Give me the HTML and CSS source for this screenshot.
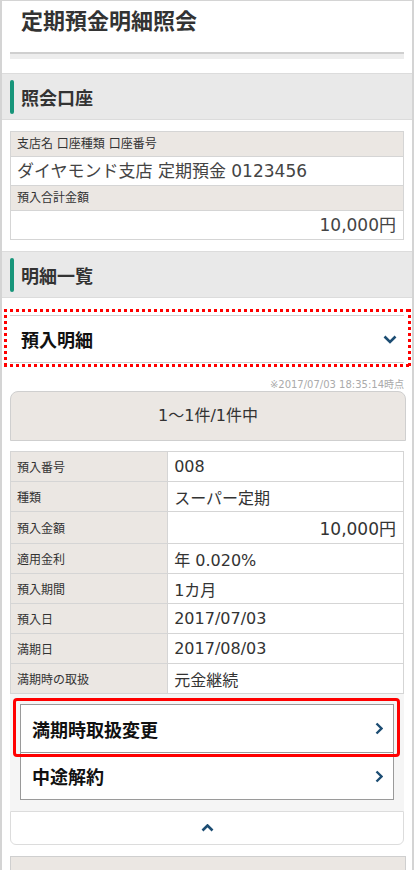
FILE: index.html
```html
<!DOCTYPE html>
<html lang="ja">
  <head>
    <meta charset="UTF-8" />
    <meta name="viewport" content="width=device-width, initial-scale=1.0" />
    <title>定期預金明細照会</title>
    <link rel="stylesheet" href="styles.css">
  </head>
  <body>
    <div class="page">
      <!-- Page header -->
      <header class="page-head">
        <h1 class="page-title">定期預金明細照会</h1>
        <div class="tab-rule"></div>
      </header>

      <!-- Account -->
      <section class="block">
        <h2 class="block-title">照会口座</h2>
        <div class="block-body">
          <table class="info-table">
            <tr><th>支店名 口座種類 口座番号</th></tr>
            <tr><td>ダイヤモンド支店 定期預金 0123456</td></tr>
            <tr><th>預入合計金額</th></tr>
            <tr><td class="num">10,000円</td></tr>
          </table>
        </div>
      </section>

      <!-- Detail list -->
      <section class="block">
        <h2 class="block-title">明細一覧</h2>
        <div class="block-body">
          <div class="acc-head">
            <span>預入明細</span>
            <svg width="14" height="9" viewBox="0 0 14 9"><path d="M1.5 1.5 L7 7 L12.5 1.5" fill="none" stroke="#1c4d73" stroke-width="2.6"/></svg>
          </div>
          <p class="stamp">※2017/07/03 18:35:14時点</p>
          <div class="pager">1〜1件/1件中</div>

          <table class="detail-table">
            <tr><th>預入番号</th><td>008</td></tr>
            <tr><th>種類</th><td>スーパー定期</td></tr>
            <tr class="amount"><th>預入金額</th><td class="num">10,000円</td></tr>
            <tr><th>適用金利</th><td>年 0.020%</td></tr>
            <tr><th>預入期間</th><td>1カ月</td></tr>
            <tr><th>預入日</th><td>2017/07/03</td></tr>
            <tr><th>満期日</th><td>2017/08/03</td></tr>
            <tr><th>満期時の取扱</th><td>元金継続</td></tr>
          </table>

          <div class="actions">
            <a class="action-btn is-marked" href="#">
              <span>満期時取扱変更</span>
              <svg width="8" height="13" viewBox="0 0 8 13"><path d="M1.5 1.5 L6.5 6.5 L1.5 11.5" fill="none" stroke="#1c4d73" stroke-width="2.4"/></svg>
            </a>
            <a class="action-btn" href="#">
              <span>中途解約</span>
              <svg width="8" height="13" viewBox="0 0 8 13"><path d="M1.5 1.5 L6.5 6.5 L1.5 11.5" fill="none" stroke="#1c4d73" stroke-width="2.4"/></svg>
            </a>
          </div>

          <div class="collapse">
            <svg width="13" height="8" viewBox="0 0 13 8"><path d="M1.5 6.5 L6.5 1.5 L11.5 6.5" fill="none" stroke="#1c4d73" stroke-width="2.6"/></svg>
          </div>

          <div class="pager next"></div>
        </div>
      </section>
    </div>
  </body>
</html>
```

FILE: styles.css
```css
body {
  margin: 0;
  font-family: "DejaVu Sans", "Noto Sans CJK JP", sans-serif;
  color: #333;
  background-color: #fff;
}
.page {
  min-height: 869px;
  border: solid #d4d4d4;
  border-width: 1px 2px 0;
  overflow: hidden;
}

/* header */
.page-head {
  padding-top: 5px;
}
.page-title {
  margin: 0;
  padding: 0 19px;
  font-size: 22px;
  line-height: 32px;
  font-weight: bold;
  color: #333;
}
.tab-rule {
  margin: 14px 8px 14px;
  height: 5px;
  border-top: 2px solid #cfcfcf;
  background-color: #ededed;
}

/* sections */
.block-title {
  display: flex;
  align-items: center;
  margin: 0;
  height: 45px;
  padding-left: 8px;
  border-top: 1px solid #dcdcdc;
  border-bottom: 1px solid #dcdcdc;
  background-color: #e9e9e9;
  font-size: 18px;
  font-weight: bold;
  color: #333;
}
.block-title::before {
  content: "";
  width: 4px;
  height: 34px;
  margin-right: 7px;
  border-radius: 2px;
  background-color: #17957a;
}
.block-body {
  padding: 11px 8px 11px;
}

/* account table */
.info-table {
  width: 100%;
  border-collapse: collapse;
  border: 1px solid #d5d5d5;
}
.info-table th {
  padding: 0 6px;
  height: 24px;
  line-height: 24px;
  font-size: 12px;
  font-weight: normal;
  text-align: left;
  background-color: #ebe7e3;
  border: 1px solid #d5d5d5;
}
.info-table td {
  padding: 0 7px 0 6px;
  height: 28px;
  line-height: 28px;
  font-size: 17px;
  color: #444;
  border: 1px solid #d5d5d5;
}
.num {
  text-align: right;
}

/* accordion */
.acc-head {
  position: relative;
  display: flex;
  align-items: center;
  justify-content: space-between;
  margin-top: 6px;
  height: 46px;
  padding: 0 7px 0 11px;
  border-top: 1px solid #cfcfcf;
  border-bottom: 1px solid #cfcfcf;
  font-size: 18px;
  font-weight: bold;
  color: #111;
}
/* square-dot red frame */
.acc-head::after {
  content: "";
  position: absolute;
  top: -7px;
  bottom: -5px;
  left: -6px;
  right: -7px;
  background:
    repeating-linear-gradient(90deg, #f00 0 3px, transparent 3px 6px) top left / 100% 3px no-repeat,
    repeating-linear-gradient(90deg, #f00 0 3px, transparent 3px 6px) bottom left / 100% 3px no-repeat,
    repeating-linear-gradient(180deg, #f00 0 3px, transparent 3px 6px) top left / 3px 100% no-repeat,
    repeating-linear-gradient(180deg, #f00 0 3px, transparent 3px 6px) top right / 3px 100% no-repeat;
  pointer-events: none;
}
.stamp {
  margin: 16px 0 0;
  line-height: 12px;
  font-size: 10px;
  color: #aaa;
  text-align: right;
}
.pager {
  margin-right: -2px;
  height: 48px;
  line-height: 48px;
  font-size: 16px;
  text-align: center;
  border: 1px solid #cfcfcf;
  border-radius: 8px 8px 0 0;
  background-color: #ebe7e3;
}

/* detail table */
.detail-table {
  width: 100%;
  margin-top: 10px;
  border-collapse: collapse;
  border: 1px solid #d5d5d5;
}
.detail-table th {
  width: 40%;
  padding: 0 6px;
  height: 29px;
  font-size: 12px;
  font-weight: normal;
  text-align: left;
  background-color: #ebe7e3;
  border: 1px solid #d5d5d5;
}
.detail-table td {
  padding: 0 7px 0 6px;
  height: 29px;
  font-size: 16px;
  background-color: #fff;
  border: 1px solid #d5d5d5;
}
.detail-table .amount th,
.detail-table .amount td {
  height: 31px;
}
.detail-table .amount td {
  font-size: 17px;
}

/* action buttons */
.actions {
  padding: 10px 10px 11px;
  background-color: #f5f5f5;
}
.action-btn {
  position: relative;
  display: flex;
  align-items: center;
  justify-content: space-between;
  height: 47px;
  padding: 0 10px 0 11px;
  border: 1px solid #9a9a9a;
  background-color: #fff;
  font-size: 18px;
  font-weight: bold;
  color: #111;
  text-decoration: none;
}
.action-btn + .action-btn {
  height: 46px;
  border-top: none;
}
.action-btn.is-marked::after {
  content: "";
  position: absolute;
  top: -7px;
  bottom: -5px;
  left: -8px;
  right: -7px;
  border: 3px solid #f00;
  border-radius: 4px;
  z-index: 1;
}
.collapse {
  display: flex;
  align-items: center;
  justify-content: center;
  height: 32px;
  border: 1px solid #dcdcdc;
  border-radius: 0 0 6px 6px;
  background-color: #fff;
}
.pager.next {
  margin-top: 11px;
  height: 40px;
  border-radius: 0;
}
```
